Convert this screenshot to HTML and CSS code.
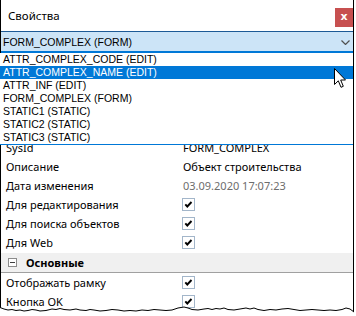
FILE: index.html
```html
<!DOCTYPE html>
<html lang="ru">
<head>
    <meta charset="UTF-8">
    <title>Свойства</title>
    <link rel="stylesheet" href="styles.css">
</head>
<body>

    <div class="window">
        <!-- Title bar -->
        <div class="titlebar">
            <span class="title">Свойства</span>
            <span class="close">x</span>
        </div>

        <!-- Object selector -->
        <div class="combo">
            <span>FORM_COMPLEX (FORM)</span>
            <svg class="chevron" width="9" height="5" viewBox="0 0 9 5">
                <polyline points="0.5,0.5 4.5,4.5 8.5,0.5" fill="none" stroke="#505050" stroke-width="1.2"/>
            </svg>
        </div>

        <div class="content">
            <!-- Property grid -->
            <div class="grid">
                <div class="row"><span class="label">SysId</span><span class="value">FORM_COMPLEX</span></div>
                <div class="row"><span class="label">Описание</span><span class="value">Объект строительства</span></div>
                <div class="row"><span class="label">Дата изменения</span><span class="value muted">03.09.2020 17:07:23</span></div>
                <div class="row"><span class="label">Для редактирования</span><span class="value"><span class="checkbox"><svg width="11" height="11" viewBox="0 0 11 11"><polyline points="2.3,5.3 4.3,7.5 8.5,3" fill="none" stroke="#000" stroke-width="1.9"/></svg></span></span></div>
                <div class="row"><span class="label">Для поиска объектов</span><span class="value"><span class="checkbox"><svg width="11" height="11" viewBox="0 0 11 11"><polyline points="2.3,5.3 4.3,7.5 8.5,3" fill="none" stroke="#000" stroke-width="1.9"/></svg></span></span></div>
                <div class="row"><span class="label">Для Web</span><span class="value"><span class="checkbox"><svg width="11" height="11" viewBox="0 0 11 11"><polyline points="2.3,5.3 4.3,7.5 8.5,3" fill="none" stroke="#000" stroke-width="1.9"/></svg></span></span></div>
                <div class="group"><span class="toggle"></span>Основные</div>
                <div class="row"><span class="label">Отображать рамку</span><span class="value"><span class="checkbox"><svg width="11" height="11" viewBox="0 0 11 11"><polyline points="2.3,5.3 4.3,7.5 8.5,3" fill="none" stroke="#000" stroke-width="1.9"/></svg></span></span></div>
                <div class="row"><span class="label">Кнопка OK</span><span class="value"><span class="checkbox"><svg width="11" height="11" viewBox="0 0 11 11"><polyline points="2.3,5.3 4.3,7.5 8.5,3" fill="none" stroke="#000" stroke-width="1.9"/></svg></span></span></div>
            </div>

            <!-- Open drop-down list -->
            <div class="list">
                <div class="list-item">ATTR_COMPLEX_CODE (EDIT)</div>
                <div class="list-item selected">ATTR_COMPLEX_NAME (EDIT)</div>
                <div class="list-item">ATTR_INF (EDIT)</div>
                <div class="list-item">FORM_COMPLEX (FORM)</div>
                <div class="list-item">STATIC1 (STATIC)</div>
                <div class="list-item">STATIC2 (STATIC)</div>
                <div class="list-item">STATIC3 (STATIC)</div>
            </div>
        </div>

        <!-- Mouse pointer -->
        <svg class="cursor" width="13" height="21" viewBox="0 0 13 21">
            <path d="M0.5,0.5 L0.5,16.5 L4.3,12.8 L7,19.3 L9.3,18.3 L6.7,12 L11.5,12 Z" fill="#fff" stroke="#000" stroke-width="1"/>
        </svg>

        <!-- Torn bottom edge of the screenshot -->
        <svg class="torn" width="356" height="12" viewBox="0 0 356 12">
            <polygon fill="#fff" points="0,3.5 4,5 8,6 12,5.5 16,6.5 20,6 24,7 28,6.5 32,5.5 36,6 40,7 46,6.5 52,5 56,5.5 60,4.5 64,5.5 70,6 76,5 80,6 86,6.5 90,5.5 94,6 100,7 106,6.5 112,5.5 118,6 124,7 130,6.5 136,7 142,6 148,6.5 154,5.5 160,6 166,6.5 172,6 178,4 184,3 188,4 192,5.5 198,6 204,5 208,4.5 212,5.5 216,4.5 220,5 224,4 228,5.5 234,6 240,5 246,4 250,5 254,4 258,5.5 264,6.5 270,5.5 276,6 282,5 288,4.5 294,5.5 300,6.5 306,6 312,5.5 318,6 324,6.5 330,6 336,6.5 342,5.5 346,4 350,5 354,8 356,8 356,12 0,12"/>
            <polyline fill="none" stroke="#000" stroke-width="1" points="0,3.5 4,5 8,6 12,5.5 16,6.5 20,6 24,7 28,6.5 32,5.5 36,6 40,7 46,6.5 52,5 56,5.5 60,4.5 64,5.5 70,6 76,5 80,6 86,6.5 90,5.5 94,6 100,7 106,6.5 112,5.5 118,6 124,7 130,6.5 136,7 142,6 148,6.5 154,5.5 160,6 166,6.5 172,6 178,4 184,3 188,4 192,5.5 198,6 204,5 208,4.5 212,5.5 216,4.5 220,5 224,4 228,5.5 234,6 240,5 246,4 250,5 254,4 258,5.5 264,6.5 270,5.5 276,6 282,5 288,4.5 294,5.5 300,6.5 306,6 312,5.5 318,6 324,6.5 330,6 336,6.5 342,5.5 346,4 350,5 354,8"/>
        </svg>
    </div>

</body>
</html>
```

FILE: styles.css
```css
body {
    margin: 0;
    width: 356px;
    height: 316px;
    overflow: hidden;
    background: #fff;
}
.window {
    position: relative;
    width: 352px;
    height: 316px;
    border-left: 1px solid #000;
    border-right: 1px solid #000;
    display: flex;
    flex-direction: column;
    background: #fff;
    color: #000;
    font-family: "Noto Sans", sans-serif;
    font-size: 11px;
}
.titlebar {
    height: 31px;
    display: flex;
    justify-content: space-between;
    flex-shrink: 0;
}
.title {
    padding-left: 7px;
    line-height: 31px;
    font-size: 11.5px;
}
.close {
    width: 18px;
    height: 19px;
    margin-top: 8px;
    background: #c75050;
    color: #fff;
    font: bold 11px/18px "DejaVu Sans", sans-serif;
    text-align: center;
}
.combo {
    height: 19px;
    flex-shrink: 0;
    border-top: 1px solid #1d5a96;
    border-bottom: 2px solid #0078d7;
    background: #cce4f7;
    display: flex;
    align-items: center;
    justify-content: space-between;
    padding: 0 3px 0 2px;
    font: 10.5px "Liberation Sans", Arial, sans-serif;
}
.chevron {
    margin-top: 1px;
}
.content {
    position: relative;
    flex: 1;
}
.grid {
    padding-top: 85px;
}
.row {
    display: grid;
    grid-template-columns: 181px 1fr;
    height: 19px;
    align-items: center;
    white-space: nowrap;
}
.label {
    padding-left: 5px;
}
.value {
    padding-left: 1px;
    display: flex;
    align-items: center;
}
.muted {
    color: #6d6d6d;
}
.checkbox {
    width: 11px;
    height: 11px;
    margin-left: -1px;
    border: 1px solid #a3b6ca;
    background: #fff;
    display: flex;
}
.group {
    height: 19px;
    margin-top: 1px;
    background: #f0f0f0;
    border-bottom: 1px solid #a0a0a0;
    display: flex;
    align-items: center;
    font-weight: bold;
}
.toggle {
    position: relative;
    width: 7px;
    height: 7px;
    margin: 0 9px 0 7px;
    border: 1px solid #8c8c8c;
    background: #fff;
}
.toggle::after {
    content: "";
    position: absolute;
    left: 1px;
    top: 3px;
    width: 5px;
    height: 1px;
    background: #404040;
}
.list {
    position: absolute;
    top: 0;
    left: -1px;
    right: 0;
    background: #fff;
    border-bottom: 1px solid #0078d7;
    font: 10.5px "Liberation Sans", Arial, sans-serif;
}
.list-item {
    height: 13px;
    line-height: 13px;
    padding-left: 3px;
    white-space: nowrap;
}
.list-item.selected {
    background: #0078d7;
    color: #fff;
}
.cursor {
    position: absolute;
    left: 333px;
    top: 68px;
}
.torn {
    position: absolute;
    left: -1px;
    bottom: 0;
}
```
